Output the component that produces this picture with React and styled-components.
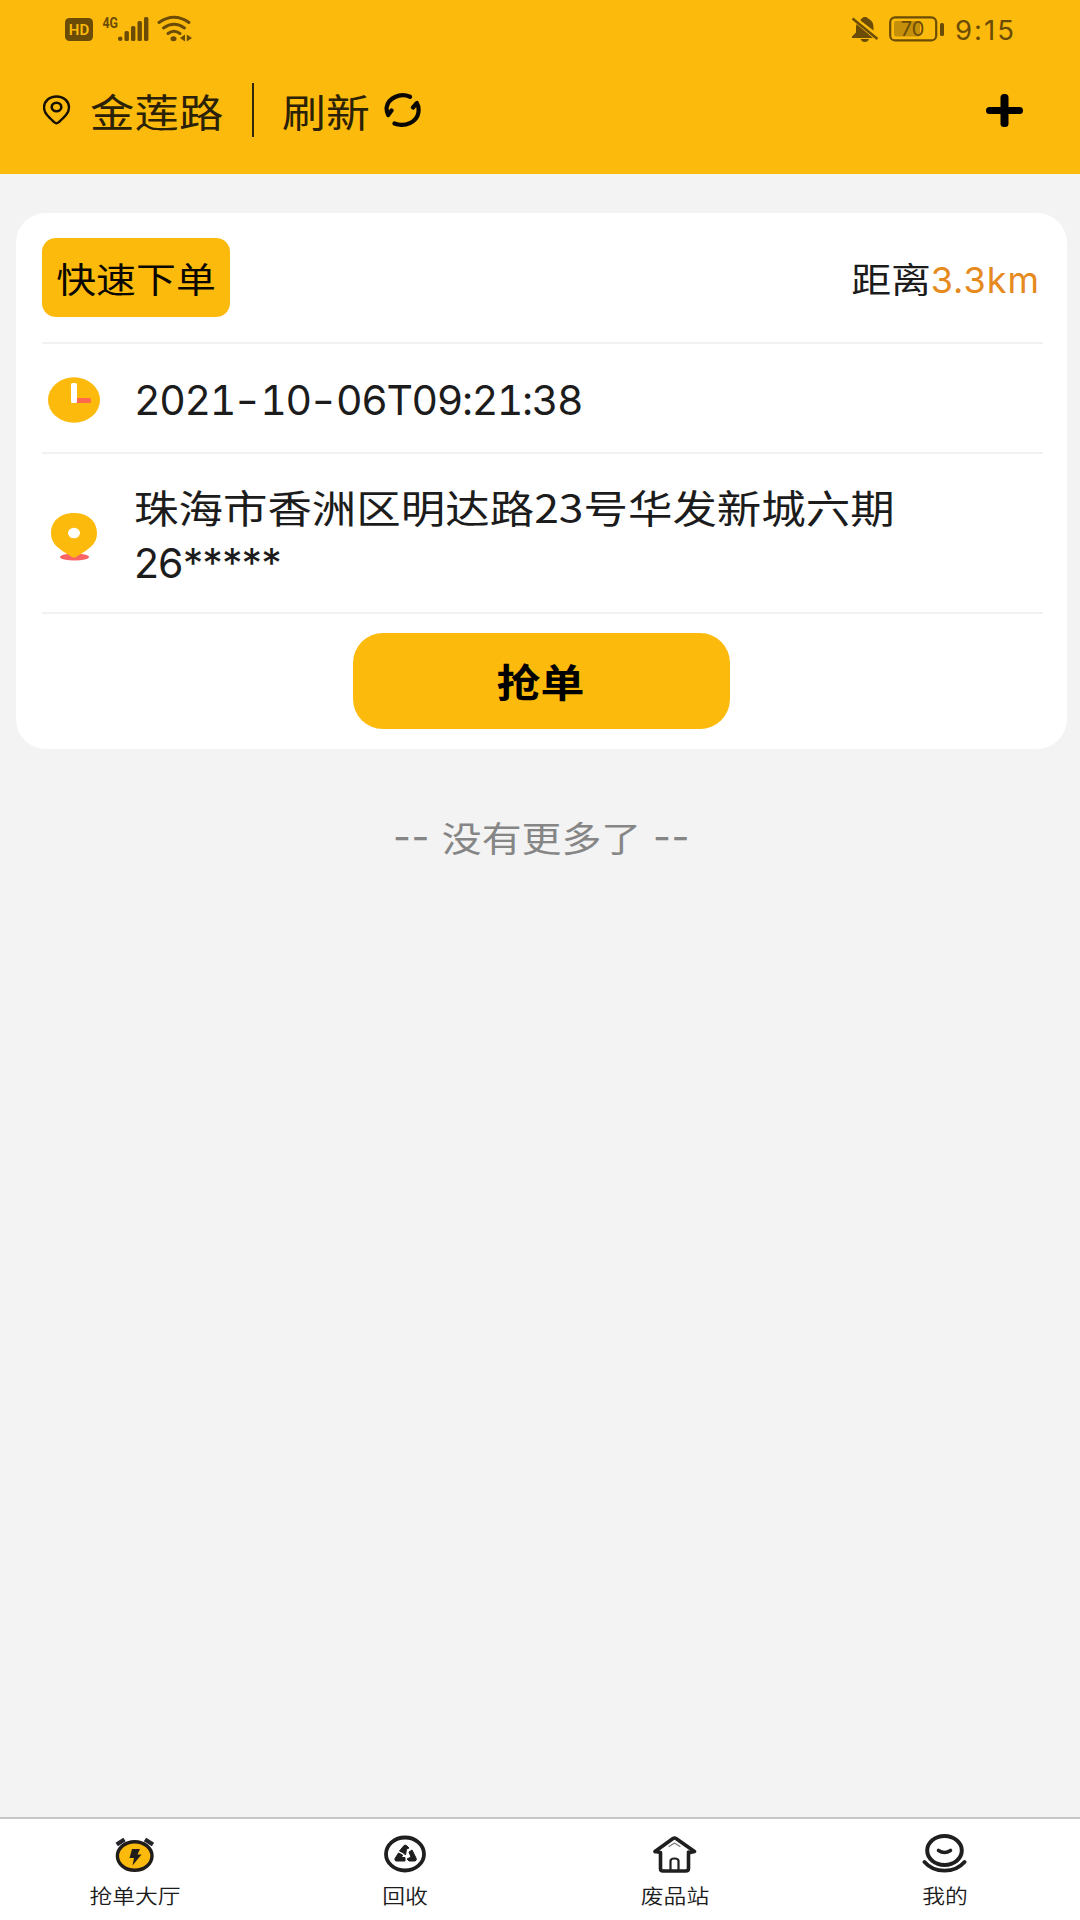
import styled, { createGlobalStyle } from "styled-components";

const GlobalStyle = createGlobalStyle`
  * {
    box-sizing: border-box;
  }

  body {
    margin: 0;
    background: #f3f3f3;
    font-family: "Noto Sans CJK SC", sans-serif;
    color: #1c1c1c;
  }
`;

const Page = styled.div`
  display: flex;
  flex-direction: column;
  height: 1920px;
  width: 1080px;
  overflow: hidden;
`;

const Header = styled.header`
  height: 174px;
  background: #fcba0c;
`;

const StatusBar = styled.div`
  display: flex;
  justify-content: space-between;
  height: 58px;
  padding: 0 65px 0 65px;
  color: #6b4c06;
`;

const StatusGroup = styled.div`
  display: flex;
  gap: ${(props) => props.$gap}px;
  padding-top: 15px;
`;

const Clock = styled.span`
  width: 60px;
  font-family: Inter, sans-serif;
  font-size: 27.5px;
  line-height: 31px;
  letter-spacing: 2px;
  white-space: nowrap;
`;

const NavBar = styled.div`
  display: flex;
  align-items: center;
  height: 104px;
  padding: 0 57px 0 43px;
`;

const Place = styled.div`
  width: 181px;
  padding-left: 19px;
`;

const Separator = styled.div`
  width: 2px;
  height: 54px;
  background: #33270a;
`;

const Refresh = styled.div`
  width: 130px;
  padding-left: 28px;
`;

const AddButton = styled.div`
  display: flex;
  margin-left: auto;
`;

const Wide = styled.span`
  display: inline-block;
  font-size: ${(props) => props.$size}px;
  font-weight: ${(props) => props.$weight || 400};
  line-height: ${(props) => props.$line || 46}px;
  color: ${(props) => props.$color || "inherit"};
  white-space: nowrap;
  transform: scaleX(1.14);
  transform-origin: ${(props) => props.$origin || "left"} center;
`;

const Latin = styled.span`
  font-family: Inter, sans-serif;
  font-size: ${(props) => props.$size}px;
  letter-spacing: ${(props) => props.$spacing || 0}px;
  color: ${(props) => props.$color || "inherit"};
  white-space: nowrap;
`;

const DateText = styled(Latin)`
  font-variant-numeric: tabular-nums;
`;

const Dash = styled.span`
  display: inline-block;
  margin: 0 3.2px;
  font-variant-numeric: normal;
  letter-spacing: 0;
  transform: scaleX(1.2);
`;

const Card = styled.section`
  margin: 39px 13px 0 16px;
  height: 536px;
  padding: 0 24px 0 26px;
  border-radius: 30px;
  background: #fff;
`;

const CardRow = styled.div`
  display: flex;
  align-items: center;
  height: ${(props) => props.$height}px;
  padding-top: ${(props) => props.$top || 0}px;
  border-bottom: 2px solid #f2f1f1;
`;

const CardHead = styled(CardRow)`
  align-items: flex-start;
  justify-content: space-between;
  padding: 25px 3px 0 0;
`;

const Tag = styled.div`
  display: flex;
  justify-content: center;
  align-items: center;
  width: 188px;
  height: 79px;
  border-radius: 14px;
  background: #fcba0c;
  color: #0a0700;
`;

const Distance = styled.div`
  display: flex;
  align-items: baseline;
  padding-top: 17px;
`;

const IconCell = styled.div`
  display: flex;
  justify-content: center;
  width: 64px;
  padding-top: ${(props) => props.$top || 0}px;
`;

const RowText = styled.div`
  display: flex;
  flex-direction: column;
  gap: 2px;
  padding: 0 0 ${(props) => props.$bottom || 0}px 28px;
`;

const CardFooter = styled.div`
  display: flex;
  justify-content: center;
  padding: 19px 3px 0 0;
`;

const GrabButton = styled.button`
  width: 377px;
  height: 96px;
  padding: 0 0 2px;
  border: none;
  border-radius: 30px;
  background: #fcba0c;
  color: #000;
  font-family: inherit;
`;

const NoMore = styled.div`
  display: flex;
  justify-content: center;
  align-items: center;
  gap: 24px;
  margin-top: 64px;
  padding-left: 3px;
  color: #868686;
`;

const TabBar = styled.nav`
  display: flex;
  height: 103px;
  margin-top: auto;
  border-top: 2px solid #c6c6c6;
  background: #fff;
`;

const Tab = styled.div`
  display: flex;
  flex: 1;
  flex-direction: column;
  align-items: center;
  gap: 7px;
  padding: 15px 1px 0 0;
`;

function NetworkIcons() {
  return (
    <svg width="130" height="28" viewBox="0 0 130 28" fill="currentColor">
      <rect x="0" y="3" width="28" height="23" rx="4.5" />
      <text x="14" y="20" fontFamily="Roboto" fontSize="15" fontWeight="600" fill="#fcba0c" textAnchor="middle">
        HD
      </text>
      <text x="37.5" y="12.5" fontFamily="Roboto" fontSize="14.5" fontWeight="700" textLength="15.5" lengthAdjust="spacingAndGlyphs">
        4G
      </text>
      <circle cx="55.2" cy="23.7" r="2.3" />
      <rect x="59.5" y="16" width="4.4" height="10" rx="1.5" />
      <rect x="66" y="11" width="4.4" height="15" rx="1.5" />
      <rect x="72.5" y="6" width="4.4" height="20" rx="1.5" />
      <rect x="79" y="2" width="4.4" height="24" rx="1.5" />
      <g fill="none" stroke="currentColor" strokeWidth="3" strokeLinecap="round">
        <path d="M94 7.500Q109 -3 124 7.500" />
        <path d="M98.500 13Q109 5.500 119.500 13" />
        <path d="M103 18.500Q109 14 115 18.500" />
      </g>
      <ellipse cx="108.5" cy="23.7" rx="3" ry="2.5" />
      <path d="M120 19.500V26.500L115 23ZM121.800 19.500V26.500L127 23Z" />
    </svg>
  );
}

function BellOff() {
  return (
    <svg width="28" height="28" viewBox="0 0 28 28" fill="currentColor">
      <path d="M10 4Q12 3 12.500 2H15.500Q16 3 18 4Q22.500 6.500 22.500 12V15.500L9.500 5.500Z" />
      <path d="M5.500 9L22 23H1V21.500L5 17.500V12Z" />
      <path d="M9.500 24H18Q17 27 13.800 27T9.500 24Z" />
      <path d="M1.500 3.500L26.500 24" fill="none" stroke="currentColor" strokeWidth="2.4" />
    </svg>
  );
}

function Battery() {
  return (
    <svg width="56" height="28" viewBox="0 0 56 28">
      <rect x="5" y="6" width="26" height="15.5" rx="2" fill="#c48f0a" />
      <rect x="1.2" y="2.4" width="46" height="23" rx="5" fill="none" stroke="currentColor" strokeWidth="2.2" />
      <rect x="51" y="8" width="4" height="13" rx="1.5" fill="currentColor" />
      <text x="23.5" y="21" fontFamily="Inter" fontSize="20" fill="currentColor" textAnchor="middle">
        70
      </text>
    </svg>
  );
}

function LocationIcon() {
  return (
    <svg width="28" height="30" viewBox="0 0 28 30" fill="none" stroke="#171100">
      <path
        d="M13.500 1.500C6 1.500 1 6.500 1 12.500C1 18 5.500 22 11 27Q13.500 29.500 16 27C21.500 22 26 18 26 12.500C26 6.500 21 1.500 13.500 1.500Z"
        strokeWidth="2.4"
      />
      <ellipse cx="13.5" cy="12" rx="4.8" ry="4.3" strokeWidth="2.6" />
    </svg>
  );
}

function RefreshIcon() {
  return (
    <svg width="38" height="34" viewBox="0 0 38 34" fill="none" stroke="#0a0700" strokeWidth="4.2" strokeLinecap="round" strokeLinejoin="round">
      <path d="M26 3.800C16 -0.500 4 5 2.600 14.500Q2.300 18 4.200 22L7.500 17.500" />
      <path d="M10.500 30.500C21 34.500 33 29 34.400 19.500Q35.200 14 32.900 10L29 14.500" />
    </svg>
  );
}

function PlusIcon() {
  return (
    <svg width="38" height="34" viewBox="0 0 38 34" fill="#000">
      <rect x="1" y="14" width="37" height="7" rx="3.5" />
      <rect x="15.5" y="1" width="8" height="33" rx="3.5" />
    </svg>
  );
}

function TimeIcon() {
  return (
    <svg width="52" height="46" viewBox="0 0 52 46">
      <ellipse cx="26" cy="23" rx="26" ry="22.8" fill="#fcba0c" />
      <rect x="26" y="21" width="17" height="5" rx="1.5" fill="#ff6a4c" />
      <rect x="23" y="6" width="6" height="20" rx="1.5" fill="#fff" />
    </svg>
  );
}

function AddressIcon() {
  return (
    <svg width="48" height="50" viewBox="0 0 48 50">
      <ellipse cx="24.5" cy="45" rx="14.5" ry="3.6" fill="#f96464" />
      <path
        d="M24 1C10 1 1 9.500 1 21C1 31 7 35 14 40L22 45Q24 46.500 26 45L34 40C41 35 47 31 47 21C47 9.500 38 1 24 1Z"
        fill="#fcba0c"
      />
      <ellipse cx="24" cy="21" rx="6" ry="5.3" fill="#fff" />
    </svg>
  );
}

function AlarmIcon() {
  return (
    <svg width="40" height="40" viewBox="0 0 40 40">
      <ellipse cx="19.7" cy="22" rx="17.3" ry="14.3" fill="#fcba0c" stroke="#1f1c1a" strokeWidth="3.4" />
      <path d="M1.700 10.500L9.500 5.500M38 10.500L30 5.500" stroke="#24262b" strokeWidth="4.4" />
      <path d="M17 15H25L22.500 20.500H26.500L17.500 31.500L19 24H14.500Z" fill="#1f1c1a" />
    </svg>
  );
}

function RecycleIcon() {
  return (
    <svg width="44" height="40" viewBox="0 0 44 40">
      <ellipse cx="22" cy="20" rx="19" ry="16.5" fill="none" stroke="#1f1f1f" strokeWidth="3.8" />
      <g fill="#1f1f1f" stroke="#1f1f1f" strokeWidth="1" strokeLinejoin="round">
        <path d="M16.500 17L21 11.500Q22 10.700 23.500 11.500L26 14L23.500 15L22.500 21L20.500 19Z" />
        <path d="M26 18L29 16L33 24Q34 26.500 32 27H26L24 25L28 23Z" />
        <path d="M15.500 19L19.500 21L18.500 23.500H22V27H13Q11.300 26.500 12 24.500Z" />
      </g>
    </svg>
  );
}

function HouseIcon() {
  return (
    <svg width="44" height="40" viewBox="0 0 44 40" fill="none" stroke="#1f1f1f" strokeLinecap="round" strokeLinejoin="round">
      <path d="M2 17.500L20 4.500Q21.500 3.500 23 4.500L41.500 17.500L37 18.500" strokeWidth="3.6" />
      <path d="M2.500 17.500L7.500 18.500V34.500Q7.500 37 10 37H32.500Q35.500 37 35.500 34.500V18" strokeWidth="3.6" />
      <path d="M17.500 37V27Q17.500 24.500 21.500 24.500T25.500 27V37" strokeWidth="2.2" />
      <path d="M16 12.500L21.500 9L27 12.500" stroke="#777" strokeWidth="1.2" />
    </svg>
  );
}

function MineIcon() {
  return (
    <svg width="46" height="40" viewBox="0 0 46 40" fill="none" stroke="#1f1f1f" strokeLinecap="round">
      <ellipse cx="22.5" cy="16.5" rx="17.3" ry="14.4" strokeWidth="4" />
      <path d="M16.500 16.500Q22.500 20.500 28.500 16.500" strokeWidth="3.6" />
      <path d="M2.500 28Q10 36.700 22.500 36.700T42.500 28" strokeWidth="3.8" />
    </svg>
  );
}

const tabs = [
  { label: "抢单大厅", icon: <AlarmIcon /> },
  { label: "回收", icon: <RecycleIcon /> },
  { label: "废品站", icon: <HouseIcon /> },
  { label: "我的", icon: <MineIcon /> },
];

export default function App() {
  return (
    <Page>
      <GlobalStyle />
      <Header>
        <StatusBar>
          <StatusGroup $gap={0}>
            <NetworkIcons />
          </StatusGroup>
          <StatusGroup $gap={10}>
            <BellOff />
            <Battery />
            <Clock>9:15</Clock>
          </StatusGroup>
        </StatusBar>
        <NavBar>
          <LocationIcon />
          <Place>
            <Wide $size={39} $color="#2b2106">金莲路</Wide>
          </Place>
          <Separator />
          <Refresh>
            <Wide $size={38.5} $color="#2b2106">刷新</Wide>
          </Refresh>
          <RefreshIcon />
          <AddButton>
            <PlusIcon />
          </AddButton>
        </NavBar>
      </Header>

      <Card>
        <CardHead $height={131}>
          <Tag>
            <Wide $size={35} $origin="center">快速下单</Wide>
          </Tag>
          <Distance>
            <Wide $size={35} $origin="right">距离</Wide>
            <Latin $size={36} $color="#e58a20" $spacing={1}>3.3km</Latin>
          </Distance>
        </CardHead>
        <CardRow $height={110} $top={4}>
          <IconCell>
            <TimeIcon />
          </IconCell>
          <RowText>
            <DateText $size={41} $spacing={-1.35}>
              2021<Dash>-</Dash>10<Dash>-</Dash>06T09:21:38
            </DateText>
          </RowText>
        </CardRow>
        <CardRow $height={160}>
          <IconCell $top={8}>
            <AddressIcon />
          </IconCell>
          <RowText $bottom={2}>
            <Wide $size={39} $line={59}>珠海市香洲区明达路23号华发新城六期</Wide>
            <Latin $size={41} $spacing={-0.9}>26*****</Latin>
          </RowText>
        </CardRow>
        <CardFooter>
          <GrabButton>
            <Wide $size={38.5} $weight={700} $origin="center">抢单</Wide>
          </GrabButton>
        </CardFooter>
      </Card>

      <NoMore>
        <Latin $size={39} $spacing={0.5}>--</Latin>
        <Wide $size={35} $origin="center">没有更多了</Wide>
        <Latin $size={39} $spacing={0.5}>--</Latin>
      </NoMore>

      <TabBar>
        {tabs.map((tab) => (
          <Tab key={tab.label}>
            {tab.icon}
            <Wide $size={20} $line={30} $weight={350} $origin="center">{tab.label}</Wide>
          </Tab>
        ))}
      </TabBar>
    </Page>
  );
}
